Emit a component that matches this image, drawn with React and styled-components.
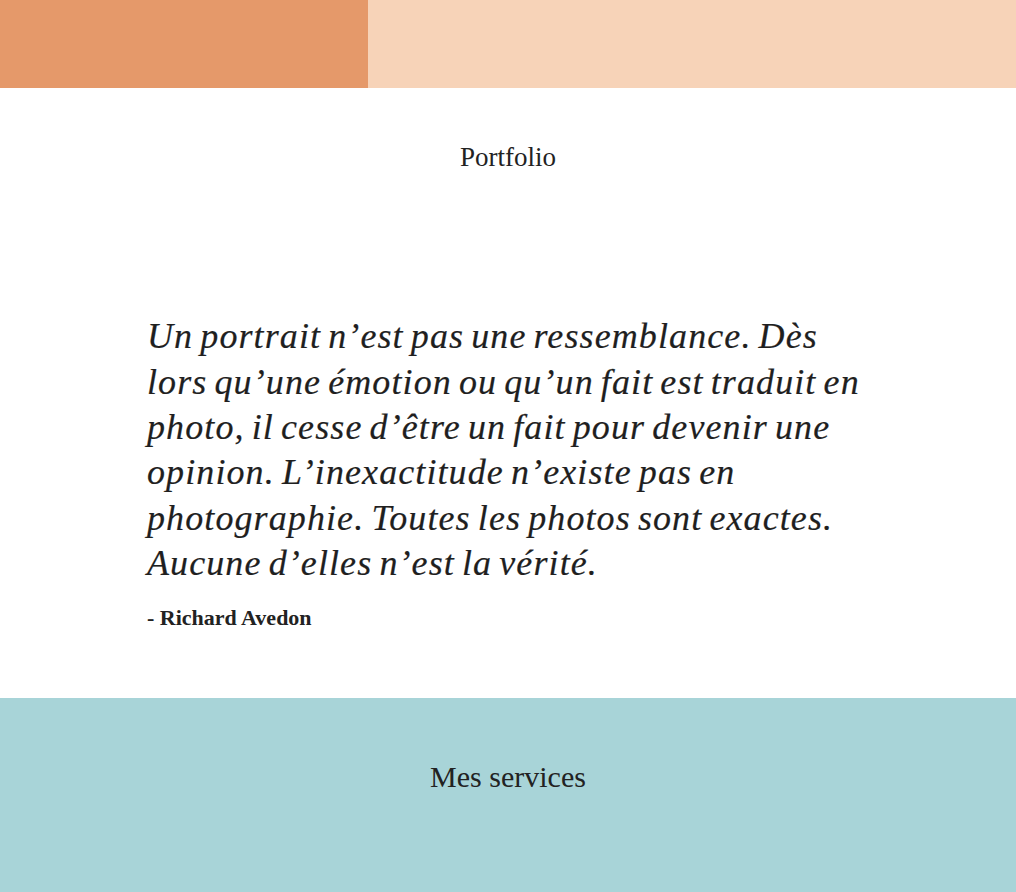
import React from "react";
import styled, { createGlobalStyle } from "styled-components";

const Global = createGlobalStyle`
  html, body { margin: 0; padding: 0; background: #fff; }
  body { font-family: "Liberation Serif", "Times New Roman", serif; color: #222; }
`;

const Header = styled.header`
  display: flex;
  height: 88px;
`;

const Block = styled.div`
  flex: ${(p) => p.$flex};
  background: ${(p) => p.$color};
`;

const Section = styled.section`
  display: flex;
  flex-direction: column;
  align-items: center;
  padding: ${(p) => p.$pad};
  background: ${(p) => p.$bg || "transparent"};
`;

const Title = styled.h2`
  margin: 0;
  font-weight: 400;
  font-size: ${(p) => p.$size};
  line-height: 1.2;
  color: #222;
`;

const Quote = styled.blockquote`
  margin: 141px 0 0;
  width: 722px;
  padding-right: 4px;
  box-sizing: border-box;
`;

const QuoteText = styled.p`
  margin: 0;
  font-style: italic;
  font-size: 36px;
  line-height: 45.3px;
  letter-spacing: 1.1px;
  word-spacing: -3px;
  color: #1f1f1f;
  -webkit-text-stroke: 0.2px #1f1f1f;
`;

const Author = styled.cite`
  display: block;
  margin-top: 20px;
  font-style: normal;
  font-weight: 700;
  font-size: 22px;
  line-height: 24px;
`;

export default function App() {
  return (
    <>
      <Global />
      <Header>
        <Block $flex="0 0 368px" $color="#E5996A" />
        <Block $flex="1" $color="#F7D3B8" />
      </Header>
      <Section $pad="53px 0 68px">
        <Title $size="27px">Portfolio</Title>
        <Quote>
          <QuoteText>
            Un portrait n’est pas une ressemblance. Dès lors qu’une émotion ou
            qu’un fait est traduit en photo, il cesse d’être un fait pour
            devenir une opinion. L’inexactitude n’existe pas en photographie.
            Toutes les photos sont exactes. Aucune d’elles n’est la vérité.
          </QuoteText>
          <Author>- Richard Avedon</Author>
        </Quote>
      </Section>
      <Section $pad="61px 0 120px" $bg="#A8D4D8">
        <Title $size="30px">Mes services</Title>
      </Section>
    </>
  );
}
